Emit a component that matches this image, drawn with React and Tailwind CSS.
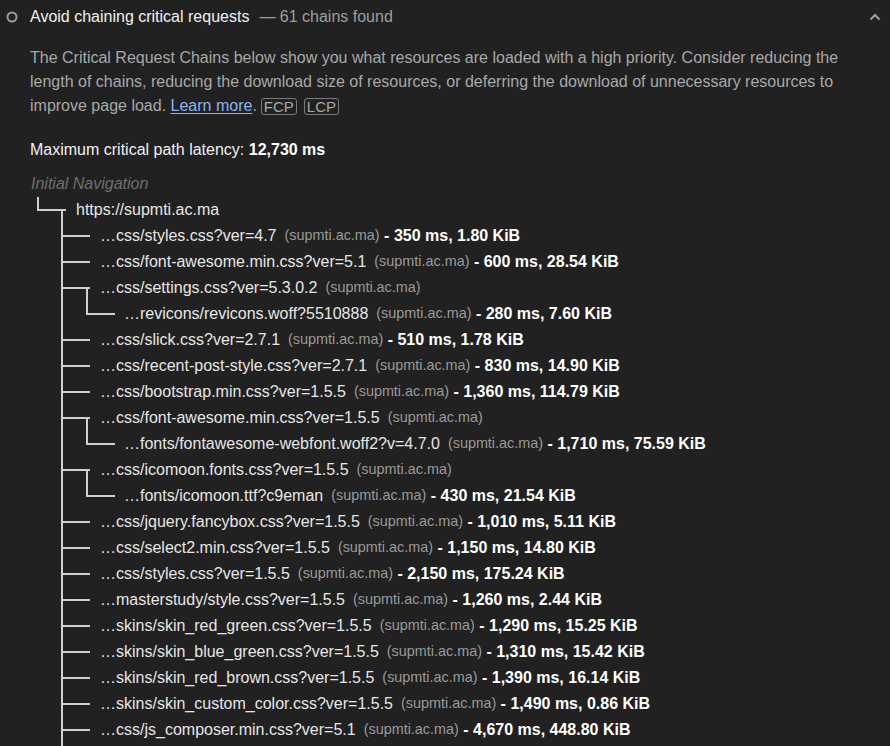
import React from "react";

const HOST = "(supmti.ac.ma)";

const chains = [
  { level: 1, url: "…css/styles.css?ver=4.7", stats: "350 ms, 1.80 KiB" },
  { level: 1, url: "…css/font-awesome.min.css?ver=5.1", stats: "600 ms, 28.54 KiB" },
  { level: 1, url: "…css/settings.css?ver=5.3.0.2", parent: true },
  { level: 2, url: "…revicons/revicons.woff?5510888", stats: "280 ms, 7.60 KiB", last: true },
  { level: 1, url: "…css/slick.css?ver=2.7.1", stats: "510 ms, 1.78 KiB" },
  { level: 1, url: "…css/recent-post-style.css?ver=2.7.1", stats: "830 ms, 14.90 KiB" },
  { level: 1, url: "…css/bootstrap.min.css?ver=1.5.5", stats: "1,360 ms, 114.79 KiB" },
  { level: 1, url: "…css/font-awesome.min.css?ver=1.5.5", parent: true },
  { level: 2, url: "…fonts/fontawesome-webfont.woff2?v=4.7.0", stats: "1,710 ms, 75.59 KiB", last: true },
  { level: 1, url: "…css/icomoon.fonts.css?ver=1.5.5", parent: true },
  { level: 2, url: "…fonts/icomoon.ttf?c9eman", stats: "430 ms, 21.54 KiB", last: true },
  { level: 1, url: "…css/jquery.fancybox.css?ver=1.5.5", stats: "1,010 ms, 5.11 KiB" },
  { level: 1, url: "…css/select2.min.css?ver=1.5.5", stats: "1,150 ms, 14.80 KiB" },
  { level: 1, url: "…css/styles.css?ver=1.5.5", stats: "2,150 ms, 175.24 KiB" },
  { level: 1, url: "…masterstudy/style.css?ver=1.5.5", stats: "1,260 ms, 2.44 KiB" },
  { level: 1, url: "…skins/skin_red_green.css?ver=1.5.5", stats: "1,290 ms, 15.25 KiB" },
  { level: 1, url: "…skins/skin_blue_green.css?ver=1.5.5", stats: "1,310 ms, 15.42 KiB" },
  { level: 1, url: "…skins/skin_red_brown.css?ver=1.5.5", stats: "1,390 ms, 16.14 KiB" },
  { level: 1, url: "…skins/skin_custom_color.css?ver=1.5.5", stats: "1,490 ms, 0.86 KiB" },
  { level: 1, url: "…css/js_composer.min.css?ver=5.1", stats: "4,670 ms, 448.80 KiB" },
];

const LINE = "#d0d0d0";

// tree connectors for one row, drawn from the left edge of the tree
const Marker = ({ level, parent, last }) => {
  const width = level === 1 ? 70 : 94;
  return (
    <svg width={width} height="26" className="block shrink-0" fill={LINE}>
      <rect x="31" y="0" width="2" height="26" />
      {level === 1 && <rect x="31" y="12" width="29" height="2" />}
      {level === 1 && parent && <rect x="56" y="12" width="2" height="14" />}
      {level === 2 && <rect x="56" y="0" width="2" height={last ? 14 : 26} />}
      {level === 2 && <rect x="56" y="12" width="29" height="2" />}
    </svg>
  );
};

const ChainRow = ({ row }) => (
  <div className="flex h-[26px] items-center whitespace-nowrap">
    <Marker {...row} />
    <span className="leading-[26px] text-[#e6e6e6]">{row.url}</span>
    <span className="ml-2 text-[14.4px] text-[#9a9a9a]">{HOST}</span>
    {row.stats && (
      <span className="font-bold text-white">&nbsp;- {row.stats}</span>
    )}
  </div>
);

export default function App() {
  return (
    <div className="h-screen overflow-hidden bg-[#212121] font-['Liberation_Sans',Arial,sans-serif] text-[16px]">
      {/* audit header */}
      <div className="flex h-[34px] items-center pl-[6px] pr-[9px]">
        <svg width="12" height="12" viewBox="0 0 12 12" className="shrink-0">
          <circle cx="6" cy="6" r="4.5" fill="none" stroke="#9e9e9e" strokeWidth="2" />
        </svg>
        <span className="ml-[12px] text-[#f0f0f0]">Avoid chaining critical requests</span>
        <span className="ml-[10px] text-[#9e9e9e]">— 61 chains found</span>
        <svg width="12" height="8" viewBox="0 0 12 8" className="ml-auto">
          <polyline points="1.5,6.5 6,2 10.5,6.5" fill="none" stroke="#9e9e9e" strokeWidth="2" />
        </svg>
      </div>

      <div className="pl-[30px] pr-[20px]">
        <p className="mt-[12px] leading-[24px] text-[#a8a8a8]">
          The Critical Request Chains below show you what resources are loaded with a high
          priority. Consider reducing the length of chains, reducing the download size of
          resources, or deferring the download of unnecessary resources to improve page load.{" "}
          <a href="#" className="text-[#8ab4f8] underline underline-offset-2">Learn more</a>.
          <span className="ml-[4px] inline-block rounded-[3px] border border-[#7a7a7a] px-[2px] align-[-1px] text-[15px] leading-[15px] text-[#a8a8a8]">FCP</span>
          <span className="ml-[7px] inline-block rounded-[3px] border border-[#7a7a7a] px-[2px] align-[-1px] text-[15px] leading-[15px] text-[#a8a8a8]">LCP</span>
        </p>

        <div className="mt-[20px] leading-[24px] text-[#f0f0f0]">
          Maximum critical path latency: <span className="font-bold text-white">12,730 ms</span>
        </div>

        <div className="mt-[9px]">
          <div className="h-[26px] pl-px italic leading-[26px] text-[#6f6f6f]">Initial Navigation</div>
          <div className="flex h-[26px] items-center whitespace-nowrap">
            <svg width="46" height="26" className="block shrink-0" fill={LINE}>
              <rect x="7" y="0" width="2" height="14" />
              <rect x="7" y="12" width="29" height="2" />
              <rect x="31" y="12" width="2" height="14" />
            </svg>
            <span className="leading-[26px] text-[#e6e6e6]">https://supmti.ac.ma</span>
          </div>
          {chains.map((row, i) => (
            <ChainRow key={i} row={row} />
          ))}
          {/* trunk keeps going below the fold */}
          <svg width="70" height="26" className="block" fill={LINE}>
            <rect x="31" y="0" width="2" height="26" />
          </svg>
        </div>
      </div>
    </div>
  );
}
